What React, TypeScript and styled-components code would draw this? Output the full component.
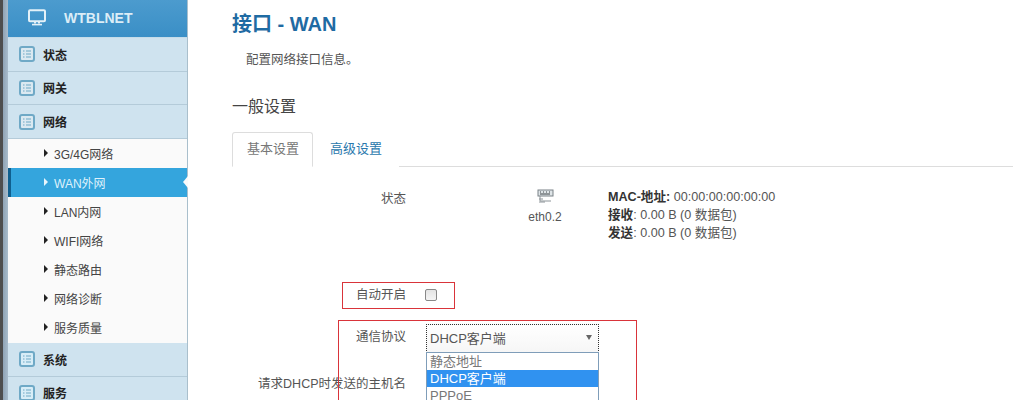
import React from "react";
import styled, { createGlobalStyle } from "styled-components";

const GlobalStyle = createGlobalStyle`
  html, body {
    margin: 0;
    padding: 0;
    background: #fff;
    height: 400px;
    overflow: hidden;
  }
  body {
    font-family: "Liberation Sans", "Noto Sans CJK SC", sans-serif;
    font-size: 13px;
    color: #555;
  }
`;

const subItems = ["3G/4G网络", "WAN外网", "LAN内网", "WIFI网络", "静态路由", "网络诊断", "服务质量"];

function ListIcon({ light }: { light?: boolean }) {
  return (
    <svg width="16" height="16" viewBox="0 0 16 16" fill="none">
      <rect x="1" y="1" width="14" height="14" rx="2" fill={light ? "#d8edf7" : "#dbe9f1"} stroke="#6fa9c6" strokeWidth="2" />
      <path d="M4 5h1.5M4 8h1.5M4 11h1.5M7 5h5M7 8h5M7 11h5" stroke="#6fa9c6" strokeWidth="1.2" />
    </svg>
  );
}

function MonitorIcon() {
  return (
    <svg width="18" height="17" viewBox="0 0 18 17" fill="none">
      <rect x="1" y="1.2" width="16" height="11" rx="1" stroke="#e4f1f8" strokeWidth="2" />
      <path d="M7 13v1.5M11 13v1.5" stroke="#e4f1f8" strokeWidth="2" />
      <path d="M4 15.6h10" stroke="#e4f1f8" strokeWidth="1.6" />
    </svg>
  );
}

function NetIcon() {
  return (
    <svg width="17" height="15" viewBox="0 0 17 15" fill="none">
      <rect x="1" y="1" width="15" height="6" fill="#dfe5e8" stroke="#7b8287" />
      <path d="M3 3h1M6 3h1M9 3h1M12 3h1M3 5h10" stroke="#3f4549" />
      <path d="M3 7v5h11M2 10h4M2 13h6" stroke="#8d9499" />
    </svg>
  );
}

export default function App() {
  return (
    <>
      <GlobalStyle />
      <Page>
        <EdgeStrip />
        <Sidebar>
          <Brand>
            <MonitorIcon />
            <BrandName>WTBLNET</BrandName>
          </Brand>
          <MenuRow>
            <ListIcon />
            <MenuLabel>状态</MenuLabel>
          </MenuRow>
          <MenuRow>
            <ListIcon />
            <MenuLabel>网关</MenuLabel>
          </MenuRow>
          <MenuRow>
            <ListIcon />
            <MenuLabel>网络</MenuLabel>
          </MenuRow>
          <SubMenu>
            {subItems.map((item) => (
              <SubRow key={item} $active={item === "WAN外网"}>
                <Arrow $active={item === "WAN外网"} />
                {item}
              </SubRow>
            ))}
          </SubMenu>
          <MenuRow>
            <ListIcon light />
            <MenuLabel>系统</MenuLabel>
          </MenuRow>
          <MenuRow>
            <ListIcon light />
            <MenuLabel>服务</MenuLabel>
          </MenuRow>
        </Sidebar>
        <Main>
          <Title>接口 - WAN</Title>
          <Description>配置网络接口信息。</Description>
          <SectionTitle>一般设置</SectionTitle>
          <Tabs>
            <Tab $active>基本设置</Tab>
            <Tab>高级设置</Tab>
          </Tabs>
          <StatusRow>
            <StatusLabel>状态</StatusLabel>
            <Device>
              <NetIcon />
              <DeviceName>eth0.2</DeviceName>
            </Device>
            <StatusInfo>
              <div>
                <b>MAC-地址:</b> 00:00:00:00:00:00
              </div>
              <div>
                <b>接收</b>: 0.00 B (0 数据包)
              </div>
              <div>
                <b>发送</b>: 0.00 B (0 数据包)
              </div>
            </StatusInfo>
          </StatusRow>
          <AutoStartRow>
            <FieldLabel>自动开启</FieldLabel>
            <CheckBox />
            <AutoStartMark />
          </AutoStartRow>
          <ProtocolGroup>
            <ProtocolMark />
            <ProtocolRow>
              <ProtocolLabel>通信协议</ProtocolLabel>
              <SelectBox>
                <SelectValue>DHCP客户端</SelectValue>
                <SelectCaret />
                <OptionList>
                  <Option>静态地址</Option>
                  <Option $selected>DHCP客户端</Option>
                  <Option>PPPoE</Option>
                </OptionList>
              </SelectBox>
            </ProtocolRow>
            <HostRow>
              <FieldLabel>请求DHCP时发送的主机名</FieldLabel>
            </HostRow>
          </ProtocolGroup>
        </Main>
      </Page>
    </>
  );
}

const Page = styled.div`
  display: flex;
  width: 1013px;
  height: 400px;
  overflow: hidden;
`;

const EdgeStrip = styled.div`
  flex: 0 0 8px;
  background: linear-gradient(90deg, #4e4e4e 0, #4e4e4e 3px, #8fa3b5 3px, #a9bccb 8px);
`;

const Sidebar = styled.div`
  position: relative;
  flex: 0 0 180px;
  box-sizing: border-box;
  background: #fafafa;
  border-right: 1px solid #a9bfcc;
`;

const Brand = styled.div`
  display: flex;
  align-items: center;
  height: 38px;
  box-sizing: border-box;
  padding: 0 0 2px 20px;
  background: linear-gradient(180deg, #4c9bce, #3a8fc6);
  border-bottom: 1px solid #c5dce9;
`;

const BrandName = styled.span`
  margin-left: 18px;
  color: #dcedf7;
  font-size: 14px;
  font-weight: 700;
`;

const MenuRow = styled.div`
  display: flex;
  align-items: center;
  height: 33.67px;
  box-sizing: border-box;
  padding-left: 11px;
  background: #cfe3ef;
  border-bottom: 1px solid #b4cbd9;
`;

const MenuLabel = styled.span`
  margin-left: 8px;
  color: #222;
  font-size: 12px;
  font-weight: 700;
`;

const SubMenu = styled.div`
  background: #fafafa;
  padding-bottom: 1px;
`;

const SubRow = styled.div<{ $active?: boolean }>`
  position: relative;
  display: flex;
  align-items: center;
  height: 29px;
  box-sizing: border-box;
  padding-left: ${(p) => (p.$active ? "33px" : "36px")};
  font-size: 12px;
  color: ${(p) => (p.$active ? "#dff1fb" : "#444")};
  background: ${(p) => (p.$active ? "#34a5dd" : "transparent")};
  border-left: ${(p) => (p.$active ? "3px solid #0f5f8e" : "none")};

  ${(p) =>
    p.$active &&
    `&::after {
      content: "";
      position: absolute;
      right: -1px;
      top: 8px;
      border: 6px solid transparent;
      border-right-color: #fafafa;
      border-right-width: 5px;
      border-left-width: 0;
    }`}
`;

const Arrow = styled.span<{ $active?: boolean }>`
  width: 0;
  height: 0;
  margin-right: 6px;
  border-style: solid;
  border-width: 4px 0 4px 4px;
  border-color: transparent transparent transparent ${(p) => (p.$active ? "#e8f5fc" : "#222")};
`;

const Main = styled.div`
  flex: 1;
  padding: 12px 0 0 44px;
`;

const Title = styled.h2`
  margin: 0;
  color: #1f6ba3;
  font-size: 20px;
  line-height: 24px;
  font-weight: 700;
`;

const Description = styled.p`
  margin: 15px 0 0 14px;
  font-size: 12.5px;
  line-height: 18px;
  color: #555;
`;

const SectionTitle = styled.h3`
  margin: 26px 0 0;
  font-size: 16px;
  line-height: 24px;
  font-weight: 400;
  color: #444;
`;

const Tabs = styled.div`
  display: flex;
  margin-top: 13px;
  height: 34px;
  border-bottom: 1px solid #ddd;
`;

const Tab = styled.div<{ $active?: boolean }>`
  box-sizing: border-box;
  height: 35px;
  padding: 0 ${(p) => (p.$active ? "13px" : "16px")} 0 ${(p) => (p.$active ? "14px" : "16px")};
  line-height: 31px;
  font-size: 13px;
  color: ${(p) => (p.$active ? "#777" : "#2a78ad")};
  background: #fff;
  border: 1px solid ${(p) => (p.$active ? "#ddd" : "transparent")};
  border-bottom-color: ${(p) => (p.$active ? "#fff" : "transparent")};
  border-radius: 3px 3px 0 0;
`;

const StatusRow = styled.div`
  display: grid;
  grid-template-columns: 174px 202px auto;
  height: 55px;
  margin-top: 22px;
`;

const StatusLabel = styled.div`
  text-align: right;
  font-size: 12.5px;
  line-height: 20px;
`;

const Device = styled.div`
  display: flex;
  flex-direction: column;
  align-items: center;
  width: 34px;
  margin-left: 122px;
`;

const DeviceName = styled.div`
  margin-top: 6px;
  font-size: 12px;
  line-height: 15px;
`;

const StatusInfo = styled.div`
  margin-top: -1px;
  font-size: 12.6px;
  line-height: 18px;
  color: #555;

  b {
    color: #333;
  }
`;

const FieldLabel = styled.div`
  flex: 0 0 174px;
  text-align: right;
  font-size: 12.5px;
  line-height: 20px;
`;

const ProtocolLabel = styled(FieldLabel)`
  padding-top: 3px;
`;

const AutoStartRow = styled.div`
  position: relative;
  display: flex;
  align-items: center;
  margin-top: 41px;
  height: 20px;
`;

const CheckBox = styled.span`
  width: 10px;
  height: 10px;
  margin-left: 19px;
  background: linear-gradient(180deg, #e4e4e4, #f4f4f4);
  border: 1px solid #888;
  border-radius: 2px;
`;

const AutoStartMark = styled.div`
  position: absolute;
  left: 110px;
  top: -3px;
  width: 111px;
  height: 25px;
  border: 1px solid #d9343a;
`;

const ProtocolGroup = styled.div`
  position: relative;
  margin-top: 19px;
`;

const ProtocolMark = styled.div`
  position: absolute;
  left: 106px;
  top: -4px;
  width: 297px;
  height: 120px;
  border: 1px solid #d9343a;
`;

const ProtocolRow = styled.div`
  display: flex;
  height: 30px;
`;

const HostRow = styled.div`
  display: flex;
  margin-top: 20px;
`;

const SelectBox = styled.div`
  position: relative;
  box-sizing: border-box;
  width: 173px;
  height: 29px;
  margin-left: 20px;
  padding: 5px 3px 0;
  background: linear-gradient(180deg, #fff, #f6f6f6);
  border: 1px dotted #333;
`;

const SelectValue = styled.div`
  font-size: 13px;
  line-height: 17px;
`;

const SelectCaret = styled.span`
  position: absolute;
  right: 6px;
  top: 10px;
  border-style: solid;
  border-width: 5px 3px 0;
  border-color: #666 transparent transparent;
`;

const OptionList = styled.div`
  position: absolute;
  left: -1px;
  top: 27px;
  width: 173px;
  box-sizing: border-box;
  background: #fff;
  border: 1px solid #7f9db9;
`;

const Option = styled.div<{ $selected?: boolean }>`
  height: 17px;
  padding-left: 3px;
  font-size: 13px;
  line-height: 17px;
  color: ${(p) => (p.$selected ? "#fff" : "#777")};
  background: ${(p) => (p.$selected ? "#3092f0" : "#fff")};
`;
